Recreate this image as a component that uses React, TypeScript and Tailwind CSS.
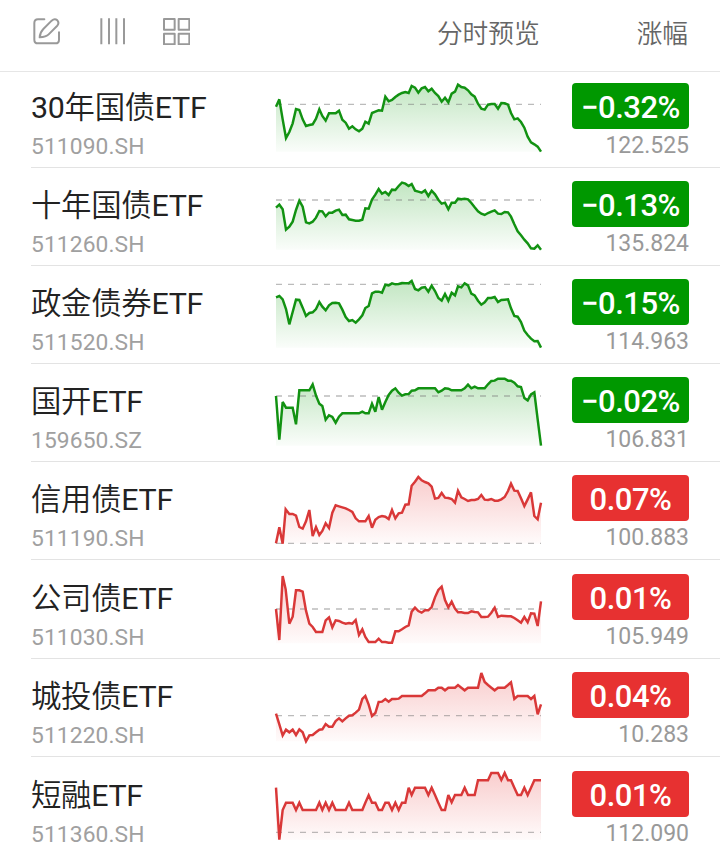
import React from "react";
import clsx from "clsx";

type Fund = {
  name: string;
  code: string;
  change: string;
  price: string;
  up?: boolean;
  row: string;
  // chart geometry, in thirds of a pixel
  top: number;
  base: number;
  floor: number;
  points: string;
};

const FUNDS: Fund[] = [
  {
    name: "30年国债ETF",
    code: "511090.SH",
    change: "−0.32%",
    price: "122.525",
    row: "h-[96px] pt-[11px]",
    top: 0,
    base: 85,
    floor: 227,
    points:
      "18,92 28,70 38,130 48,186 58,168 68,142 78,99 88,102 98,130 108,150 118,147 128,145 138,128 148,100 157,120 167,134 177,112 187,112 197,112 207,104 217,131 227,140 237,158 247,151 257,160 267,166 277,158 286,137 296,143 306,111 316,107 326,103 336,104 346,62 356,76 366,72 376,63 386,56 396,51 406,48 416,51 425,30 435,35 445,50 455,37 465,33 475,46 485,38 495,51 505,60 515,77 525,65 535,79 545,53 555,47 564,26 574,33 584,35 594,43 604,55 614,62 624,83 634,98 644,101 654,86 664,84 674,84 684,98 694,81 704,82 714,86 723,111 733,130 743,127 753,138 763,155 773,182 783,199 793,205 803,212 813,227",
  },
  {
    name: "十年国债ETF",
    code: "511260.SH",
    change: "−0.13%",
    price: "135.824",
    row: "h-[98px] pt-[13px]",
    top: 0,
    base: 78,
    floor: 227,
    points:
      "18,101 28,92 38,106 48,167 58,158 68,143 78,108 88,80 98,98 108,145 118,148 128,143 138,131 148,111 157,112 167,127 177,116 187,116 197,110 207,107 217,123 227,122 237,136 247,138 257,140 267,140 277,137 286,103 296,104 306,77 316,62 326,45 336,59 346,54 356,63 366,47 376,48 386,36 396,26 406,29 416,36 425,30 435,50 445,53 455,56 465,49 475,66 485,50 495,61 505,77 515,89 525,86 535,106 545,86 555,86 564,74 574,76 584,74 594,76 604,87 614,100 624,112 634,119 644,123 654,117 664,113 674,109 684,119 694,120 704,114 714,115 723,128 733,151 743,172 753,184 763,197 773,208 783,223 793,224 803,214 813,227",
  },
  {
    name: "政金债券ETF",
    code: "511520.SH",
    change: "−0.15%",
    price: "114.963",
    row: "h-[98px] pt-[13px]",
    top: 0,
    base: 37,
    floor: 227,
    points:
      "18,76 28,72 38,82 48,111 58,157 68,120 78,83 88,84 98,107 108,132 118,123 128,121 138,111 148,90 157,104 167,115 177,100 187,93 197,92 207,94 217,113 227,135 237,147 247,144 257,152 267,142 277,130 286,108 296,102 306,64 316,59 326,59 336,62 346,38 356,40 366,34 376,37 386,36 396,33 406,34 416,34 425,27 435,51 445,55 455,47 465,45 475,59 485,41 495,57 505,78 515,86 525,66 535,86 545,62 555,70 564,43 574,46 584,34 594,40 604,65 614,70 624,86 634,98 644,91 654,78 664,78 674,75 684,90 694,84 704,83 714,82 723,109 733,132 743,134 753,150 763,176 773,189 783,200 793,208 803,207 813,227",
  },
  {
    name: "国开ETF",
    code: "159650.SZ",
    change: "−0.02%",
    price: "106.831",
    row: "h-[98px] pt-[13px]",
    top: 0,
    base: 78,
    floor: 227,
    points:
      "18,78 28,209 38,96 48,113 58,113 68,113 78,163 88,61 98,61 108,61 118,61 128,43 138,77 148,101 157,108 167,149 177,136 187,141 197,158 207,140 217,130 227,130 237,130 247,130 257,130 267,130 277,125 286,130 296,130 306,101 316,125 326,81 336,119 346,96 356,75 366,62 376,55 386,68 396,77 406,73 416,72 425,62 435,61 445,55 455,55 465,55 475,55 485,55 495,55 505,67 515,62 525,55 535,56 545,61 555,61 564,61 574,61 584,55 594,44 604,55 614,50 624,55 634,55 644,55 654,43 664,33 674,32 684,26 694,26 704,26 714,32 723,32 733,38 743,49 753,51 763,84 773,91 783,73 793,67 803,148 813,227",
  },
  {
    name: "信用债ETF",
    code: "511190.SH",
    change: "0.07%",
    price: "100.883",
    up: true,
    row: "h-[98px] pt-[13px]",
    top: 0,
    base: 226,
    floor: 227,
    points:
      "18,226 28,178 38,227 47,124 58,138 68,138 78,143 88,177 98,182 108,160 118,126 128,204 138,177 148,201 157,189 167,166 177,180 187,134 197,112 207,115 217,118 227,121 237,126 247,132 257,151 267,160 277,160 286,160 296,144 306,179 316,155 326,147 336,144 346,146 356,153 366,126 376,151 386,136 396,134 406,110 416,109 425,53 435,41 445,27 455,37 465,42 475,46 485,56 495,92 505,90 515,75 525,89 535,90 545,93 555,104 564,68 574,88 584,93 594,99 604,96 614,96 624,93 634,81 644,95 654,96 664,93 674,98 684,98 694,94 704,87 714,69 723,47 733,68 743,69 753,91 763,114 773,94 783,73 793,144 803,154 813,104",
  },
  {
    name: "公司债ETF",
    code: "511030.SH",
    change: "0.01%",
    price: "105.949",
    up: true,
    row: "h-[99px] pt-[14px]",
    top: 3,
    base: 129,
    floor: 232,
    points:
      "18,129 28,222 38,30 47,70 58,173 68,152 78,73 88,73 98,77 108,134 118,173 128,183 138,198 148,198 157,198 167,163 177,154 187,184 197,163 207,165 217,170 227,173 237,171 247,173 257,162 267,207 277,190 286,213 296,228 306,228 316,228 326,218 336,228 346,228 356,230 366,230 376,196 386,196 396,190 406,183 416,178 425,137 435,125 445,135 455,140 465,133 475,133 485,123 495,94 505,72 515,62 525,102 535,124 545,107 555,128 564,139 574,139 584,141 594,141 604,136 614,138 624,139 634,153 644,153 654,152 664,140 674,125 684,153 694,149 704,150 714,151 723,151 733,156 743,163 753,170 763,153 773,169 783,142 793,143 803,180 813,106",
  },
  {
    name: "城投债ETF",
    code: "511220.SH",
    change: "0.04%",
    price: "10.283",
    up: true,
    row: "h-[98px] pt-[13px]",
    top: 3,
    base: 155,
    floor: 232,
    points:
      "18,149 28,181 38,214 48,197 58,205 68,197 78,213 88,196 98,205 108,232 118,214 128,213 138,205 148,197 157,196 167,180 177,188 187,188 197,171 207,163 217,172 227,163 237,155 247,154 257,146 267,137 277,105 286,96 296,122 306,156 316,147 326,114 336,113 346,105 356,113 366,105 376,105 386,104 396,96 406,96 416,96 425,96 435,96 445,96 455,96 465,88 475,79 485,79 495,79 505,71 515,71 525,79 535,71 545,71 555,71 564,63 574,71 584,79 594,71 604,71 614,71 624,71 634,27 644,54 654,63 664,71 674,79 684,71 694,71 704,71 714,63 723,55 733,105 743,96 753,96 763,96 773,96 783,105 793,96 803,151 813,121",
  },
  {
    name: "短融ETF",
    code: "511360.SH",
    change: "0.01%",
    price: "112.090",
    up: true,
    row: "h-[95px] pt-[14px]",
    top: 6,
    base: 211,
    floor: 234,
    points:
      "18,77 28,233 38,144 48,122 58,122 68,122 78,144 88,122 98,144 108,144 118,144 128,144 138,144 148,122 157,144 167,122 177,144 187,122 197,144 207,144 217,144 227,144 237,122 247,144 257,144 267,144 277,144 286,122 296,100 306,122 316,122 326,144 336,144 346,122 356,122 366,144 376,122 386,144 396,122 406,122 416,77 425,99 435,77 445,77 455,77 465,77 475,99 485,77 495,99 505,122 515,144 525,144 535,99 545,121 555,99 564,99 574,99 584,77 594,99 604,99 614,99 624,55 634,55 644,55 654,55 664,33 674,33 684,33 694,54 704,33 714,55 723,55 733,77 743,99 753,99 763,77 773,99 783,77 793,55 803,55 813,55",
  },
];

function Sparkline({ fund }: { fund: Fund }) {
  const { up, top, base, floor, points, code } = fund;
  const id = `fill-${code.slice(0, 6)}`;
  const fill = up ? "#e63232" : "#089a08";

  return (
    <svg
      viewBox={`0 ${top} 840 258`}
      className="-mt-[7px] h-[86px] w-[280px] shrink-0"
      fill="none"
    >
      <defs>
        <linearGradient id={id} gradientUnits="userSpaceOnUse" x1="0" y1="24" x2="0" y2={floor}>
          <stop offset="0" stopColor={fill} stopOpacity="0.25" />
          <stop offset="1" stopColor={fill} stopOpacity="0.02" />
        </linearGradient>
      </defs>
      <polygon points={`18,${floor} ${points} 813,${floor}`} fill={`url(#${id})`} />
      <path d={`M18 ${base}H813`} stroke="#777" strokeOpacity="0.5" strokeWidth="4.2" strokeDasharray="18 18" />
      <polyline
        points={points}
        stroke={up ? "#d93838" : "#129212"}
        strokeWidth="7.4"
        strokeLinejoin="miter"
        strokeMiterlimit="3"
      />
    </svg>
  );
}

// Han characters get a slightly lighter weight than the latin around them
function FundName({ name }: { name: string }) {
  return (
    <div className="mt-[5px] text-[30.4px] leading-[40px] tracking-[-0.3px] text-[#222]">
      {name.split(/(\p{Script=Han}+)/u).map((part, i) => (
        <span key={i} className={i % 2 ? "font-[350]" : "font-normal"}>
          {part}
        </span>
      ))}
    </div>
  );
}

function FundRow({ fund, last }: { fund: Fund; last: boolean }) {
  return (
    <li
      className={clsx(
        "ml-[31px] flex items-start pr-[31px]",
        !last && "border-b border-[#e3e3e3]",
        fund.row
      )}
    >
      <div className="w-[239px] shrink-0 whitespace-nowrap">
        <FundName name={fund.name} />
        <div className="mt-[4px] text-[22.8px] leading-[30px] tracking-[0.1px] text-[#a0a0a0]">{fund.code}</div>
      </div>

      <Sparkline fund={fund} />

      <div className="ml-auto flex w-[117px] flex-col items-end">
        <div
          className={clsx(
            "h-[46px] w-[117px] rounded-[4px] text-center text-[31px] leading-[50px] font-medium tracking-[-0.5px] text-white",
            fund.up ? "bg-[#e73131]" : "bg-[#009800]"
          )}
        >
          {fund.change}
        </div>
        <div className="mt-[2px] text-[23px] leading-[30px] text-[#999]">{fund.price}</div>
      </div>
    </li>
  );
}

function Toolbar() {
  return (
    <div className="flex items-center text-[#999]">
      <svg viewBox="0 0 84 84" className="size-[28px]" fill="none" stroke="currentColor" strokeWidth="6" strokeLinecap="round" strokeLinejoin="round">
        <path d="M34 7H15Q4 7 4 18V68Q4 79 15 79H67Q78 79 78 68V46" />
        <path d="M20 61C21 48 25 42 31 36L56 11Q65 3 73 10Q80 18 72 27L47 52C41 58 33 60 20 61Z" />
      </svg>
      <svg viewBox="0 0 84 84" className="ml-[38px] size-[28px]" fill="none" stroke="currentColor" strokeWidth="6">
        <path d="M7 4V82M30 4V82M52 4V82M75 4V82" />
      </svg>
      <svg viewBox="0 0 84 84" className="ml-[35px] size-[28px]" fill="none" stroke="currentColor" strokeWidth="6" strokeLinejoin="round">
        <path d="M6 6H38V38H6ZM50 6H82V38H50ZM6 50H38V82H6ZM50 50H82V82H50Z" />
      </svg>
    </div>
  );
}

export default function App() {
  return (
    <div className="h-[852px] w-[720px] overflow-hidden bg-white font-['Roboto','Noto_Sans_CJK_SC',sans-serif]">
      <header className="flex h-[72px] items-start border-b border-[#e6e6e6] pr-[32px] pl-[33px] text-[25.7px] leading-[36px] font-[350] text-[#666]">
        <div className="mt-[17px]">
          <Toolbar />
        </div>
        <div className="mt-[16px] ml-auto">分时预览</div>
        <div className="mt-[16px] ml-[97px]">涨幅</div>
      </header>
      <ul>
        {FUNDS.map((fund, i) => (
          <FundRow key={fund.code} fund={fund} last={i === FUNDS.length - 1} />
        ))}
      </ul>
    </div>
  );
}
